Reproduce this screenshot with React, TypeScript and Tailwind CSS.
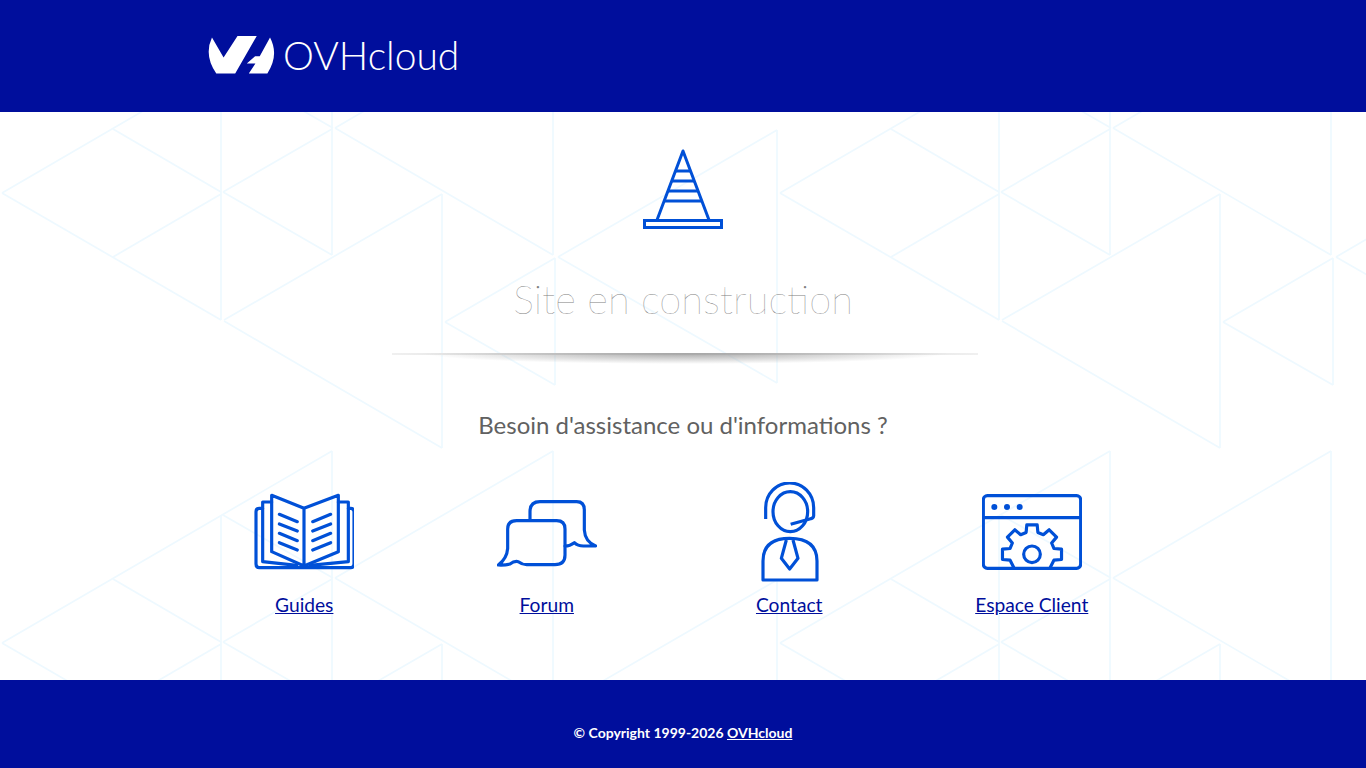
const BLUE = "#0050d7";

// one tile of the background, in page coordinates
const TILE: number[][] = [
  [2, 193, 332, 1],
  [113, 129, 221, 192],
  [221, 66, 221, 320],
  [2, 193, 221, 320],
  [113, 257, 221, 194],
  [223, 192, 332, 129],
  [332, 1, 332, 255],
  [223, 192, 332, 255],
  [223, 65, 333, 128],
  [335, 128, 553, 1],
  [335, 128, 553, 255],
  [553, 1, 553, 255],
  [555, 258, 555, 385],
  [558, 257, 777, 130],
  [777, 130, 777, 383],
  [558, 257, 777, 383],
  [555, 258, 445, 322],
  [445, 322, 555, 385],
  [224, 320, 442, 194],
  [442, 194, 442, 448],
  [224, 321, 442, 448],
];

function Pattern() {
  const shifts: number[][] = [];
  for (const x of [0, 778]) for (const y of [-112, 338]) shifts.push([x, y]);
  return (
    <svg className="absolute inset-0 w-full h-full" aria-hidden="true">
      {shifts.map(([sx, sy]) => (
        <g key={`${sx}-${sy}`} stroke="#eef9ff" strokeWidth="1.7">
          {TILE.map(([x1, y1, x2, y2], i) => (
            <line key={i} x1={x1 + sx} y1={y1 + sy} x2={x2 + sx} y2={y2 + sy} />
          ))}
        </g>
      ))}
    </svg>
  );
}

function Logo() {
  return (
    <svg viewBox="50 42 205 125" className="w-[68px] h-[42px]" fill="#fff" aria-hidden="true">
      <path d="M65,52 L100,112 L142,47 H200 L135,160 H78 Q40,105 65,52 Z" />
      <path d="M240,52 Q268,105 232,160 H176 L196,130 H170 L195,108 H209 Z" />
    </svg>
  );
}

function Cone() {
  return (
    <svg viewBox="0 0 80 80" className="w-20 h-20" fill="none" stroke={BLUE} strokeWidth="3">
      <path d="M14,71 L40,2 L66,71" strokeLinejoin="round" />
      <path d="M32.5,22 H47.5 M28.5,32 H51.5 M25,42 H55 M21,52 H59" />
      <rect x="1.5" y="71.5" width="77" height="7" />
    </svg>
  );
}

function BookIcon() {
  return (
    <svg viewBox="42 6 300 300" className="w-[100px] h-[100px]" fill="none" stroke={BLUE} strokeWidth="9.5" strokeLinejoin="round" strokeLinecap="round">
      <path d="M68,85 H58 Q48,85 48,95 V252 Q48,263 58,263 H332 Q342,263 342,252 V95 Q342,85 332,85 H325" />
      <path d="M95,66 H68 V245 L170,256 M295,66 H325 V245 L210,256" />
      <path d="M95,46 L192,85 L295,46 V215 L192,258 L95,215 Z M192,85 V258" />
      <path d="M118,103 L172,125 M118,132 L172,153 M118,160 L172,182 M118,188 L172,210" />
      <path d="M218,125 L272,103 M218,153 L272,132 M218,182 L272,160 M218,210 L272,188" />
    </svg>
  );
}

function ForumIcon() {
  return (
    <svg viewBox="36 6 300 300" className="w-[100px] h-[100px]" fill="none" stroke={BLUE} strokeWidth="9.5" strokeLinejoin="round" strokeLinecap="round">
      <path d="M135,120 V95 Q135,65 165,65 H275 Q298,65 298,90 V150 Q300,185 332,198 H295 Q278,198 268,188 Q255,198 240,198" />
      <path d="M95,122 H215 Q240,122 240,147 V225 Q240,254 210,254 H125 Q112,254 100,245 Q88,242 75,252 Q60,256 40,255 Q66,235 68,205 V147 Q68,122 95,122 Z" />
    </svg>
  );
}

function ContactIcon() {
  return (
    <svg viewBox="28 21 300 300" className="w-[100px] h-[100px]" fill="none" stroke={BLUE} strokeWidth="9.5" strokeLinejoin="round">
      <path d="M108,132 V98 A72,74 0 0 1 252,98 V122 Q252,130 240,132 L183,148" />
      <ellipse cx="182" cy="110" rx="52" ry="60" />
      <path d="M100,315 V258 Q100,190 180,190 Q262,190 262,258 V315 Z" />
      <path d="M170,195 L155,250 L180,282 L205,250 L190,195" />
    </svg>
  );
}

function gearPath() {
  const cx = 186;
  const cy = 208;
  const pts: string[] = [];
  const at = (deg: number, r: number) => {
    const a = (deg * Math.PI) / 180;
    return `${(cx + r * Math.cos(a)).toFixed(1)},${(cy + r * Math.sin(a)).toFixed(1)}`;
  };
  pts.push(at(142, 68));
  for (const t of [180, 225, 270, 315, 360]) {
    pts.push(at(t - 15, 68), at(t - 10, 90), at(t + 10, 90), at(t + 15, 68));
  }
  pts.push(at(398, 68));
  return "M" + pts.join(" L");
}

function ClientIcon() {
  return (
    <svg viewBox="36 -9 300 300" className="w-[100px] h-[100px]" fill="none" stroke={BLUE} strokeWidth="9.5" strokeLinejoin="round">
      <rect x="40" y="32" width="292" height="218" rx="12" />
      <path d="M40,98 H332" />
      <circle cx="73" cy="66" r="9" fill={BLUE} stroke="none" />
      <circle cx="111" cy="66" r="9" fill={BLUE} stroke="none" />
      <circle cx="149" cy="66" r="9" fill={BLUE} stroke="none" />
      <path d={gearPath()} />
      <circle cx="186" cy="208" r="25" />
    </svg>
  );
}

const LINKS = [
  { label: "Guides", Icon: BookIcon },
  { label: "Forum", Icon: ForumIcon },
  { label: "Contact", Icon: ContactIcon },
  { label: "Espace Client", Icon: ClientIcon },
];

export default function App() {
  return (
    <div className="h-screen flex flex-col bg-white font-['Lato',sans-serif] overflow-hidden">
      <header className="h-[112px] shrink-0 bg-[#000e9c] flex items-center pl-[207px] pb-[2px] gap-[8px]">
        <Logo />
        <span className="text-[39px] leading-none font-light text-white">OVHcloud</span>
      </header>

      <main className="relative flex-1">
        <Pattern />
        <div className="relative flex flex-col items-center pt-[37px]">
          <Cone />
          <h1 className="mt-[46px] text-[40px] leading-[48px] font-thin text-[#808080]">Site en construction</h1>
          <div className="mt-[30px] ml-[4px] h-[11px] w-[586px] relative">
            <div className="absolute inset-x-0 top-0 h-[2px] bg-gradient-to-r from-[#f0f0f0] via-[#c8c8c8] to-[#f0f0f0]" />
            <div className="absolute inset-0 bg-[radial-gradient(ellipse_45%_100%_at_50%_0,#a6a6a6,transparent)]" />
          </div>
          <h2 className="mt-[44px] text-[24px] leading-[34px] text-[#616161]">Besoin d&apos;assistance ou d&apos;informations ?</h2>
          <div className="mt-[40px] w-[1000px] pr-[30px] grid grid-cols-4">
            {LINKS.map(({ label, Icon }) => (
              <div key={label} className="flex flex-col items-center">
                <Icon />
                <a href="#" className="mt-[10px] text-[19.2px] leading-[26px] text-[#000e9c] underline">{label}</a>
              </div>
            ))}
          </div>
        </div>
      </main>

      <footer className="h-[88px] shrink-0 bg-[#000e9c] flex items-center justify-center pt-[16px] text-[14px] font-bold text-white">
        <span>© Copyright 1999-2026 <a href="#" className="underline">OVHcloud</a></span>
      </footer>
    </div>
  );
}
